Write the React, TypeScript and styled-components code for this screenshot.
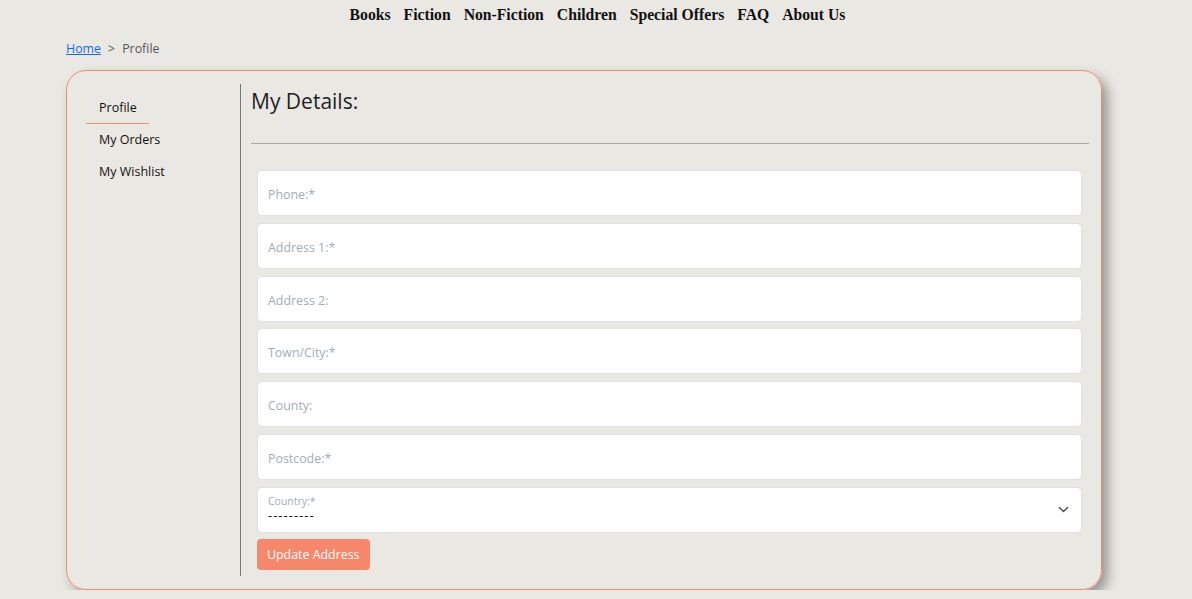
import React from "react";
import styled, { createGlobalStyle } from "styled-components";

const Global = createGlobalStyle`
  html, body { margin: 0; padding: 0; background: #eae8e3; }
  body { font-family: "Open Sans", "Noto Sans", sans-serif; color: #212529; }
  * { box-sizing: border-box; }
`;

const TopNav = styled.nav`
  display: flex;
  justify-content: center;
  gap: 13px;
  padding-top: 5px;
  padding-left: 3px;
  height: 34px;
`;

const NavLink = styled.a`
  font-family: "Liberation Serif", "DejaVu Serif", serif;
  font-weight: bold;
  font-size: 15.7px;
  line-height: 20px;
  color: #111;
  text-decoration: none;
`;

const Crumbs = styled.div`
  margin-left: 66px;
  font-size: 12.4px;
  line-height: 18px;
  color: #555;
  display: flex;
  gap: 7px;
  height: 36px;
  align-items: center;
  padding-bottom: 6px;
`;

const CrumbLink = styled.a`
  color: #0d6efd;
  text-decoration: underline;
`;

const Card = styled.div`
  margin-left: 66px;
  width: 1036px;
  height: 520px;
  border: 1px solid #f58b6b;
  border-radius: 20px;
  box-shadow: 6px 6px 12px rgba(0, 0, 0, 0.35);
  display: flex;
  padding: 13px 12px 13px 19px;
`;

const Sidebar = styled.aside`
  width: 155px;
  border-right: 1px solid #777;
  display: flex;
  flex-direction: column;
  align-items: flex-start;
  padding-top: 8px;
`;

const SideItem = styled.a<{ $active?: boolean }>`
  font-size: 12.5px;
  line-height: 20px;
  padding: 6px 12px 5px 13px;
  color: #111;
  text-decoration: none;
  border-bottom: 1px solid ${(p) => (p.$active ? "#f58b6b" : "transparent")};
`;

const Main = styled.main`
  flex: 1;
  padding-left: 10px;
  display: flex;
  flex-direction: column;
`;

const Heading = styled.h2`
  font-weight: 400;
  font-size: 21px;
  line-height: 26px;
  margin: 4px 0 0;
  color: #222;
`;

const Rule = styled.hr`
  border: none;
  border-top: 1px solid #aaa;
  margin: 29px 0 26px;
`;

const Form = styled.form`
  display: flex;
  flex-direction: column;
  gap: 6.8px;
  padding: 0 7px 0 6px;
`;

const Field = styled.div`
  height: 46px;
  background: #fff;
  border: 1px solid #dee2e6;
  border-radius: 5px;
  display: flex;
  align-items: center;
  padding: 3px 10px 0;
  font-size: 12.4px;
  color: #a2acb6;
`;

const SelectField = styled.div`
  height: 46px;
  background: #fff;
  border: 1px solid #dee2e6;
  border-radius: 5px;
  display: flex;
  align-items: center;
  justify-content: space-between;
  padding: 0 12px 0 10px;
`;

const SelectText = styled.div`
  display: flex;
  flex-direction: column;
  gap: 1px;
  margin-top: -2px;
`;

const SmallLabel = styled.span`
  font-size: 10.5px;
  line-height: 12px;
  color: #a2acb6;
`;

const SelectValue = styled.span`
  font-size: 13px;
  line-height: 15px;
  letter-spacing: 1px;
  color: #111;
`;

const Button = styled.button`
  align-self: flex-start;
  margin-top: -1px;
  height: 31px;
  padding: 0 10px;
  background: #f7876b;
  color: #fff;
  border: none;
  border-radius: 4px;
  font-family: inherit;
  font-size: 12.4px;
`;

const fields = ["Phone:*", "Address 1:*", "Address 2:", "Town/City:*", "County:", "Postcode:*"];

export default function App() {
  return (
    <>
      <Global />
      <TopNav>
        {["Books", "Fiction", "Non-Fiction", "Children", "Special Offers", "FAQ", "About Us"].map((n) => (
          <NavLink key={n} href="#">{n}</NavLink>
        ))}
      </TopNav>
      <Crumbs>
        <CrumbLink href="#">Home</CrumbLink>
        <span>&gt;</span>
        <span>Profile</span>
      </Crumbs>
      <Card>
        <Sidebar>
          <SideItem $active href="#">Profile</SideItem>
          <SideItem href="#">My Orders</SideItem>
          <SideItem href="#">My Wishlist</SideItem>
        </Sidebar>
        <Main>
          <Heading>My Details:</Heading>
          <Rule />
          <Form>
            {fields.map((f) => (
              <Field key={f}>{f}</Field>
            ))}
            <SelectField>
              <SelectText>
                <SmallLabel>Country:*</SmallLabel>
                <SelectValue>---------</SelectValue>
              </SelectText>
              <svg width="11" height="11" viewBox="0 0 16 16" fill="none" stroke="#444a50" strokeWidth="2" strokeLinecap="round" strokeLinejoin="round">
                <path d="M2 5l6 6 6-6" />
              </svg>
            </SelectField>
            <Button type="button">Update Address</Button>
          </Form>
        </Main>
      </Card>
    </>
  );
}
